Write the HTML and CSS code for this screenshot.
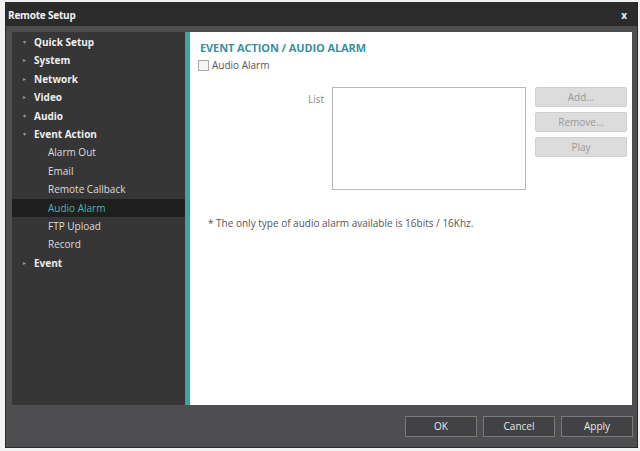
FILE: index.html
```html
<!DOCTYPE html>
<html lang="en">
<head>
  <meta charset="UTF-8">
  <title>Remote Setup</title>
  <link rel="stylesheet" href="styles.css">
</head>
<body>
  <div class="window">
    <div class="titlebar">
      <span class="title">Remote Setup</span>
      <span class="close">x</span>
    </div>
    <div class="body">
      <ul class="nav">
        <li class="top"><span class="dot">&#9662;</span>Quick Setup</li>
        <li class="top"><span class="dot">&#9656;</span>System</li>
        <li class="top"><span class="dot">&#9656;</span>Network</li>
        <li class="top"><span class="dot">&#9656;</span>Video</li>
        <li class="top"><span class="dot">&#9662;</span>Audio</li>
        <li class="top"><span class="dot">&#9662;</span>Event Action</li>
        <li class="sub">Alarm Out</li>
        <li class="sub">Email</li>
        <li class="sub">Remote Callback</li>
        <li class="sub active">Audio Alarm</li>
        <li class="sub">FTP Upload</li>
        <li class="sub">Record</li>
        <li class="top"><span class="dot">&#9656;</span>Event</li>
      </ul>
      <div class="content">
        <h2>EVENT ACTION / AUDIO ALARM</h2>
        <label class="check"><span class="box"></span>Audio Alarm</label>
        <div class="list-row">
          <span class="list-label">List</span>
          <div class="listbox"></div>
          <div class="side-btns">
            <button class="light">Add...</button>
            <button class="light">Remove...</button>
            <button class="light">Play</button>
          </div>
        </div>
        <p class="note">* The only type of audio alarm available is 16bits / 16Khz.</p>
      </div>
    </div>
    <div class="footer">
      <button class="dark">OK</button>
      <button class="dark">Cancel</button>
      <button class="dark">Apply</button>
    </div>
  </div>
</body>
</html>
```

FILE: styles.css
```css
body {
  margin: 0;
  background: #f2f2f2;
  font-family: "Open Sans", "DejaVu Sans", sans-serif;
  font-size: 10px;
}
.window {
  margin: 2px 4px 0 5px;
  width: 631px;
  background: #4e4e51;
  border: 1px solid #2a2a2a;
}
.titlebar {
  height: 23px;
  background: #2b2b2b;
  color: #f0f0f0;
  display: flex;
  align-items: center;
  justify-content: space-between;
  padding: 0 10px 0 2px;
}
.title {
  font-weight: bold;
  font-size: 10px;
  letter-spacing: -0.2px;
}
.close {
  font-weight: bold;
  font-size: 10px;
}
.body {
  display: flex;
  margin: 6px 5px 0 6px;
  height: 373px;
}
.nav {
  list-style: none;
  margin: 0;
  padding: 1px 0 0 0;
  width: 173px;
  flex-shrink: 0;
  background: #363636;
  border-right: 5px solid #3aa6a3;
  color: #eeeeee;
}
.nav li {
  height: 18.4px;
  line-height: 18px;
  white-space: nowrap;
}
.nav .top {
  font-weight: bold;
  padding-left: 11px;
}
.nav .dot {
  display: inline-block;
  width: 11px;
  font-size: 6px;
  color: #9a9a9a;
  vertical-align: top;
}
.nav .sub {
  padding-left: 36px;
  color: #dddddd;
}
.nav .active {
  background: #1f1f1f;
  color: #48b7ae;
}
.content {
  flex: 1;
  min-width: 0;
  background: #ffffff;
  padding: 8px 2px 0 10px;
  color: #555;
}
.content h2 {
  margin: 0;
  font-size: 11px;
  font-weight: bold;
  color: #3a8f9c;
  letter-spacing: -0.1px;
}
.check {
  display: flex;
  align-items: center;
  gap: 3px;
  margin-top: 3px;
  margin-left: -2px;
  color: #555;
}
.box {
  width: 9px;
  height: 9px;
  border: 1px solid #aaa;
  background: #f4f4f4;
}
.list-row {
  display: flex;
  margin-top: 15px;
}
.list-label {
  width: 124px;
  flex-shrink: 0;
  text-align: right;
  padding-right: 8px;
  padding-top: 5px;
  color: #888;
}
.listbox {
  width: 192px;
  height: 101px;
  flex-shrink: 0;
  border: 1px solid #b8b8b8;
}
.side-btns {
  display: flex;
  flex-direction: column;
  gap: 5px;
  margin-left: 9px;
}
button {
  font-family: inherit;
  font-size: 10px;
}
.light {
  width: 92px;
  height: 20px;
  border: 1px solid #cfcfcf;
  border-radius: 2px;
  background: #dcdcdc;
  color: #9a9a9a;
}
.note {
  margin: 26px 0 0 8px;
  color: #555;
}
.footer {
  height: 42px;
  display: flex;
  justify-content: flex-end;
  align-items: center;
  gap: 6px;
  padding-right: 4px;
}
.dark {
  width: 72px;
  height: 21px;
  background: #424244;
  border: 1px solid #7a7a7a;
  color: #e8e8e8;
}
```
